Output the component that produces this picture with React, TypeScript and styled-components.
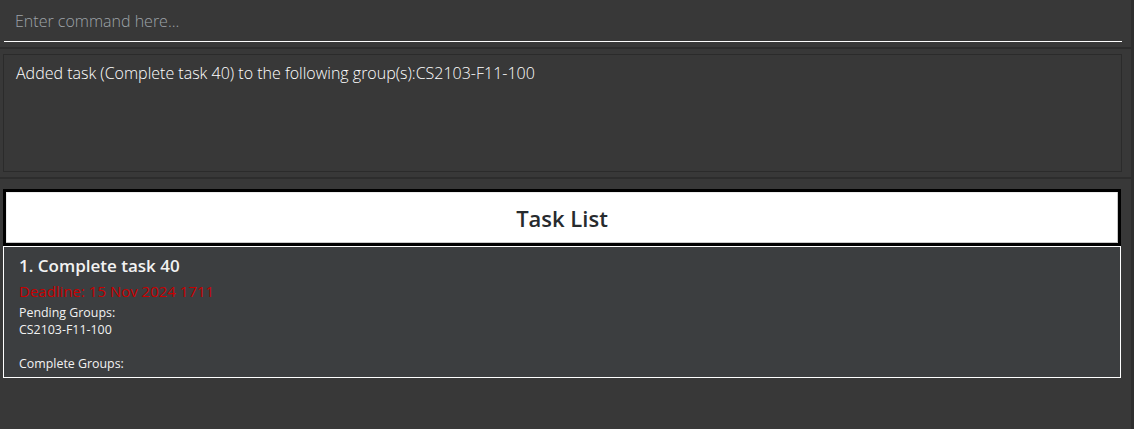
import React from 'react';
import styled, { createGlobalStyle } from 'styled-components';

const GlobalStyle = createGlobalStyle`
    html, body {
        margin: 0;
        padding: 0;
        background: #383838;
    }
    * {
        box-sizing: border-box;
    }
`;

const Window = styled.div`
    width: 1134px;
    height: 429px;
    display: flex;
    flex-direction: column;
    background-color: #383838;
    border-right: 3px solid #2e2e2e;
    overflow: hidden;
    font-family: "Open Sans", "Noto Sans", sans-serif;
`;

const CommandPane = styled.div`
    padding: 0 9px 5px 4px;
    border-bottom: 2px solid #2d2d2d;
`;

const CommandField = styled.input`
    display: block;
    width: 100%;
    height: 42px;
    margin: 0;
    padding: 0 0 0 11px;
    border: none;
    border-bottom: 1px solid #ffffff;
    background: transparent;
    color: #ffffff;
    font-family: "Open Sans", "Noto Sans", sans-serif;
    font-weight: 300;
    font-size: 16px;
    outline: none;

    &::placeholder {
        color: #9ea3a8;
    }
`;

const ResultPane = styled.div`
    padding: 5px 9px 5px 3px;
    border-bottom: 2px solid #2d2d2d;
`;

const ResultBox = styled.div`
    height: 118px;
    border: 1px solid #2b2b2b;
    padding: 6px 12px;
    color: #ffffff;
    font-weight: 300;
    font-size: 16px;
    line-height: 24px;
`;

const ListPane = styled.div`
    flex: 1;
    padding: 10px 10px 0 3px;
    display: flex;
    flex-direction: column;
`;

const ListHeader = styled.div`
    height: 57px;
    border: 3px solid #000000;
    background: #ffffff;
    box-shadow: inset -1px -1px 0 #c8c8c8, inset 1px 1px 0 #ececec;
    display: flex;
    align-items: center;
    justify-content: center;
    color: #272b2e;
    font-weight: 600;
    font-size: 22px;
`;

const TaskCard = styled.div`
    height: 132px;
    border: 1px solid #ffffff;
    background-color: #3c3e40;
    padding: 6px 15px;
    display: flex;
    flex-direction: column;
`;

const TaskTitle = styled.div`
    color: #f2f2f2;
    font-weight: 600;
    font-size: 17px;
    line-height: 25px;
`;

const Deadline = styled.div`
    color: #c80000;
    font-weight: 500;
    font-size: 15px;
    line-height: 22px;
    margin: 2px 0 2px;
`;

const SmallLabel = styled.div`
    color: #f2f2f2;
    font-size: 12.4px;
    line-height: 17px;
    min-height: 17px;
`;

export default function App() {
    return (
        <>
            <GlobalStyle />
            <Window>
                <CommandPane>
                    <CommandField placeholder="Enter command here..." />
                </CommandPane>
                <ResultPane>
                    <ResultBox>
                        Added task (Complete task 40) to the following group(s):CS2103-F11-100
                    </ResultBox>
                </ResultPane>
                <ListPane>
                    <ListHeader>Task List</ListHeader>
                    <TaskCard>
                        <TaskTitle>1. Complete task 40</TaskTitle>
                        <Deadline>Deadline: 15 Nov 2024 1711</Deadline>
                        <SmallLabel>Pending Groups:</SmallLabel>
                        <SmallLabel>CS2103-F11-100</SmallLabel>
                        <SmallLabel />
                        <SmallLabel>Complete Groups:</SmallLabel>
                    </TaskCard>
                </ListPane>
            </Window>
        </>
    );
}
